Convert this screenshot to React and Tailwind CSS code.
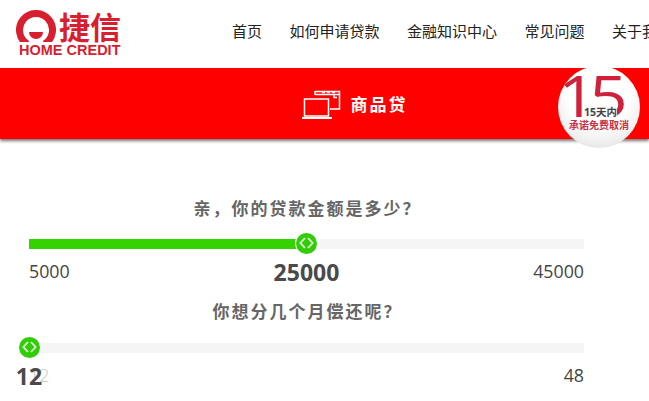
const sans = '"Open Sans", "Noto Sans CJK SC", sans-serif';

function Logo() {
  return (
    <div className="flex flex-col w-[104px] shrink-0 ml-[16px] mt-[10px]">
      <div className="flex items-center h-[32px]">
        <svg width="40" height="32" viewBox="0 0 40 32" className="shrink-0">
          <path d="M11.3 34 A16.5 16.5 0 1 1 28.7 34" fill="none" stroke="#d71f30" strokeWidth="7" />
          <path d="M13 22 H27 A7 7 0 0 1 13 22 Z" fill="#d71f30" />
        </svg>
        <span className="text-[31px] leading-[32px] font-bold text-[#d71f30] ml-[3px] whitespace-nowrap" style={{ fontFamily: '"Noto Sans CJK SC", sans-serif' }}>捷信</span>
      </div>
      <span className="text-[14.5px] leading-[16px] font-bold text-[#d71f30] whitespace-nowrap ml-[3px]" style={{ fontFamily: '"Liberation Sans", sans-serif' }}>HOME CREDIT</span>
    </div>
  );
}

function ProductIcon() {
  return (
    <svg width="42" height="30" viewBox="0 0 42 30" fill="none" stroke="#fff" className="shrink-0">
      <path d="M14 2.5 H38.5 V20 H29" strokeWidth="1.5" />
      <path d="M14 2 V6 M14 5.5 H38 M33 5.5 V8.5 H36" strokeWidth="1.5" />
      <path d="M21 3.5 h3 M26 3.5 h3 M31 3.5 h3" strokeWidth="1.5" />
      <rect x="3.5" y="10" width="24" height="17" strokeWidth="1.5" />
      <path d="M1 29 H31" strokeWidth="2" />
    </svg>
  );
}

function Badge() {
  return (
    <div className="absolute right-[9px] top-[66px] w-[82px] h-[82px] rounded-full overflow-hidden" style={{ background: 'radial-gradient(circle at 50% 35%, #ffffff 45%, #f0f0f0 70%, #d4d4d4 100%)' }}>
      <span className="absolute left-[0px] top-[-3px] origin-left scale-x-[1.2] tracking-[-6px] text-[#d0213a] text-[56px] leading-[64px] font-medium whitespace-nowrap" style={{ fontFamily: '"Open Sans", sans-serif' }}>15</span>
      <span className="absolute left-[26px] top-[40px] bg-[#f9f9f9] text-[10.5px] leading-[12px] font-bold text-[#444] whitespace-nowrap" style={{ fontFamily: sans }}>15天内</span>
      <span className="absolute left-[11px] top-[52px] text-[10px] leading-[13px] font-bold text-[#c8324a] whitespace-nowrap" style={{ fontFamily: '"Noto Sans CJK SC", sans-serif' }}>承诺免费取消</span>
    </div>
  );
}

function Slider({ pct, value, min, max, minClass }) {
  return (
    <div className="relative">
      <div className="h-[10px] bg-[#f5f5f5] relative">
        <div className="h-full bg-[#33d200]" style={{ width: `${pct}%` }} />
        <div className="absolute top-[-8px] w-[24px] h-[24px] -ml-[12px] rounded-full bg-white flex items-center justify-center" style={{ left: `${pct}%` }}>
          <div className="w-[21px] h-[21px] rounded-full bg-[#2fce06] flex items-center justify-center">
            <svg width="15" height="12" viewBox="0 0 15 12" fill="none" stroke="#e8ffe0" strokeWidth="1.8">
              <path d="M6 1 L1.4 6 L6 11 M9 1 L13.6 6 L9 11" />
            </svg>
          </div>
        </div>
      </div>
      <div className="relative flex justify-between text-[17.8px] leading-[24px] mt-[10px] text-[#444]" style={{ fontFamily: sans }}>
        <span className={minClass}>{min}</span>
        <span>{max}</span>
        <span className="absolute top-[1px] -translate-x-1/2 text-[23px] leading-[24px] font-bold text-[#4a4a4a]" style={{ left: `${pct}%` }}>{value}</span>
      </div>
    </div>
  );
}

function Question({ children }) {
  return (
    <p className="text-center text-[17px] leading-[24px] font-bold tracking-[2px] text-[#666] pl-[2px]" style={{ fontFamily: '"Noto Sans CJK SC", serif' }}>{children}</p>
  );
}

export default function App() {
  const nav = ['首页', '如何申请贷款', '金融知识中心', '常见问题', '关于我们'];
  return (
    <div className="relative w-[649px] h-[401px] overflow-hidden bg-white" style={{ fontFamily: sans }}>
      <header className="h-[68px] flex overflow-hidden">
        <Logo />
        <nav className="flex gap-[27.5px] ml-[112px] pt-[23px] text-[15px] leading-[16px] text-[#222] whitespace-nowrap" style={{ fontFamily: '"Noto Sans CJK SC", sans-serif' }}>
          {nav.map((n) => <span key={n}>{n}</span>)}
        </nav>
      </header>
      <div className="h-[71px] bg-[#ff0000] flex items-center justify-center gap-[8px] pl-[59px] shadow-[0_2px_3px_rgba(0,0,0,0.55)]">
        <ProductIcon />
        <span className="text-[17px] font-bold text-white tracking-[2px]" style={{ fontFamily: '"Noto Sans CJK SC", serif' }}>商品贷</span>
      </div>
      <Badge />
      <main className="pl-[29px] pr-[65px] w-[649px]">
        <div className="pt-[57px]">
          <Question>亲，你的贷款金额是多少？</Question>
          <div className="mt-[19px]">
            <Slider pct={50} value="25000" min="5000" max="45000" />
          </div>
        </div>
        <div className="mt-[16px]">
          <Question>你想分几个月偿还呢？</Question>
          <div className="mt-[20px]">
            <Slider pct={0} value="12" min="12" max="48" minClass="text-[#c4c4c4] font-light" />
          </div>
        </div>
      </main>
    </div>
  );
}
